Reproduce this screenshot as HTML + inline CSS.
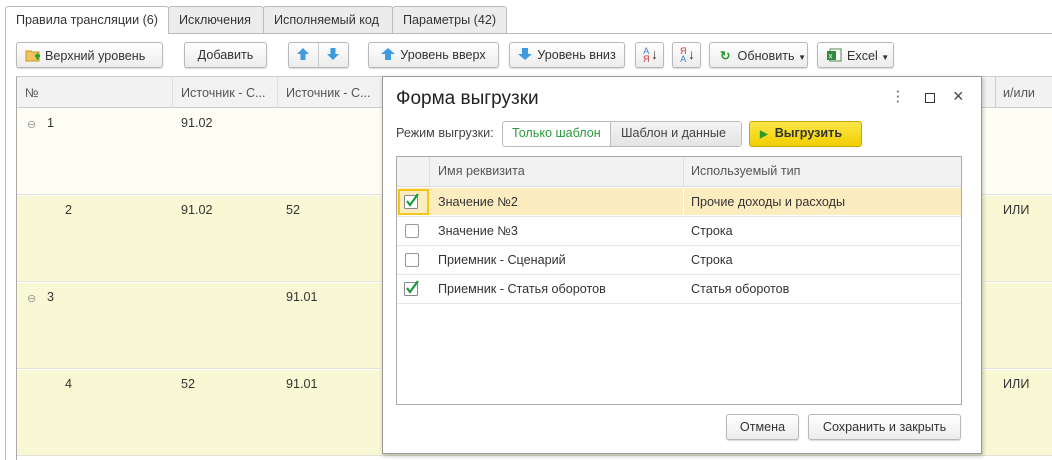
<!DOCTYPE html>
<html><head><meta charset="utf-8"><style>
*{box-sizing:border-box;margin:0;padding:0}
body{width:1052px;height:460px;overflow:hidden;background:#fff;font-family:"Liberation Sans",Arial,sans-serif;font-size:12.6px;color:#333;position:relative}
.a{position:absolute}
.tab{position:absolute;top:6px;height:27px;border:1px solid #bbb;border-bottom:none;background:#ececec;border-radius:3px 3px 0 0;padding:6px 10px 0;color:#333;white-space:nowrap}
.btn{position:absolute;top:42px;height:26px;border:1px solid #b8b8b8;border-radius:3px;background:linear-gradient(#fff,#ececec);box-shadow:0 1px 1px rgba(0,0,0,.15);padding:5px 0 0;text-align:center;color:#333;white-space:nowrap}
.cell{position:absolute;white-space:nowrap}
.hd{background:#f2f2f2;color:#555}
</style></head><body>
<div class="a" style="left:5px;top:33px;width:1047px;height:1px;background:#bbb"></div>
<div class="a" style="left:5px;top:33px;width:1px;height:427px;background:#bbb"></div>
<div class="tab" style="left:5px;width:164px;background:#fff;height:28px;z-index:2">Правила трансляции (6)</div>
<div class="tab" style="left:168px;width:96px">Исключения</div>
<div class="tab" style="left:263px;width:130px">Исполняемый код</div>
<div class="tab" style="left:392px;width:115px">Параметры (42)</div>

<div class="btn" style="left:16px;width:147px;text-align:left;padding-left:8px"><svg width="16" height="14" style="vertical-align:-2px;margin-right:4px"><path d="M1 3h5l1 1h7v9H1z" fill="#f3c35a" stroke="#c8962a"/><path d="M10 8h5M12.5 5.5v6" stroke="#2a2" stroke-width="2.4"/></svg>Верхний уровень</div>
<div class="btn" style="left:184px;width:83px">Добавить</div>
<div class="btn" style="left:288px;width:61px"></div>
<div class="a" style="left:318px;top:43px;width:1px;height:24px;background:#ccc"></div>
<svg class="a" style="left:296px;top:47px" width="14" height="14"><path d="M7 1L13 7H9.5v6h-5V7H1z" fill="#3d9be0"/></svg>
<svg class="a" style="left:326px;top:47px" width="14" height="14"><path d="M7 13L13 7H9.5V1h-5v6H1z" fill="#3d9be0"/></svg>
<div class="btn" style="left:368px;width:131px"><svg width="14" height="12" style="vertical-align:-1px;margin-right:5px"><path d="M7 0L14 6H10v6H4V6H0z" fill="#3d9be0"/></svg>Уровень вверх</div>
<div class="btn" style="left:509px;width:116px"><svg width="14" height="12" style="vertical-align:-1px;margin-right:5px"><path d="M7 12L14 6H10V0H4v6H0z" fill="#3d9be0"/></svg>Уровень вниз</div>
<div class="btn" style="left:635px;width:29px;font-size:9px;line-height:8px;padding-top:5px"><span style="color:#3a7fd0;position:absolute;left:7px;top:4px">А<br><span style="color:#c33">Я</span></span><span style="position:absolute;left:15px;top:3px;font-size:14px;line-height:16px">↓</span></div>
<div class="btn" style="left:672px;width:29px;font-size:9px;line-height:8px;padding-top:5px"><span style="color:#c33;position:absolute;left:7px;top:4px">Я<br><span style="color:#3a7fd0">А</span></span><span style="position:absolute;left:15px;top:3px;font-size:14px;line-height:16px">↓</span></div>
<div class="btn" style="left:709px;width:99px;text-align:left;padding-left:10px"><span style="color:#2a9a2a;font-weight:bold">↻</span>&nbsp; Обновить <span style="font-size:8px">▼</span></div>
<div class="btn" style="left:817px;width:77px;text-align:left;padding-left:8px"><svg width="16" height="14" style="vertical-align:-2px;margin-right:5px"><rect x="4" y="1" width="11" height="12" fill="#fff" stroke="#4a8a4a"/><rect x="1" y="3" width="9" height="9" fill="#2e8b3e"/><text x="2.5" y="10.5" font-size="8" fill="#fff" font-family="Liberation Sans">x</text></svg>Excel <span style="font-size:8px">▼</span></div>

<div class="a" style="left:16px;top:76px;width:1040px;height:384px;border-left:1px solid #aaa;border-top:1px solid #ccc"></div>
<div class="a hd" style="left:17px;top:77px;width:1035px;height:31px;border-bottom:1px solid #ccc"></div>
<div class="a" style="left:172px;top:77px;width:1px;height:118px;background:#e0e0e0"></div>
<div class="a" style="left:277px;top:77px;width:1px;height:118px;background:#e0e0e0"></div>
<div class="a" style="left:995px;top:77px;width:1px;height:31px;background:#ccc"></div>
<div class="cell" style="left:25px;top:86px;color:#555">№</div>
<div class="cell" style="left:181px;top:86px;color:#555">Источник - С...</div>
<div class="cell" style="left:286px;top:86px;color:#555">Источник - С...</div>
<div class="cell" style="left:1003px;top:86px;color:#555">и/или</div>
<div class="a" style="left:17px;top:108px;width:1035px;height:87px;background:#fefef4;border-bottom:1px solid #e2e2d8"></div>
<div class="a" style="left:17px;top:196px;width:1035px;height:86px;background:#f8f8d4;border-bottom:1px solid #e2e2d8"></div>
<div class="a" style="left:17px;top:283px;width:1035px;height:86px;background:#f8f8d4;border-bottom:1px solid #e2e2d8"></div>
<div class="a" style="left:17px;top:370px;width:1035px;height:86px;background:#f8f8d4;border-bottom:1px solid #e2e2d8"></div>
<div class="cell" style="left:27px;top:118px;color:#999;font-size:11px">⊖</div><div class="cell" style="left:47px;top:116px">1</div>
<div class="cell" style="left:181px;top:116px">91.02</div>
<div class="cell" style="left:65px;top:203px">2</div><div class="cell" style="left:181px;top:203px">91.02</div><div class="cell" style="left:286px;top:203px">52</div><div class="cell" style="left:1003px;top:203px">ИЛИ</div>
<div class="cell" style="left:27px;top:292px;color:#999;font-size:11px">⊖</div><div class="cell" style="left:47px;top:290px">3</div><div class="cell" style="left:286px;top:290px">91.01</div>
<div class="cell" style="left:65px;top:377px">4</div><div class="cell" style="left:181px;top:377px">52</div><div class="cell" style="left:286px;top:377px">91.01</div><div class="cell" style="left:1003px;top:377px">ИЛИ</div>

<div class="a" style="left:382px;top:76px;width:600px;height:378px;background:#fff;border:1px solid #999;box-shadow:1px 2px 4px rgba(0,0,0,.25)"></div>
<div class="cell" style="left:396px;top:88px;font-size:19px;color:#222">Форма выгрузки</div>
<div class="cell" style="left:896px;top:89px;color:#777;font-size:13px;line-height:5px;font-weight:bold">·<br>·<br>·</div>
<div class="a" style="left:925px;top:93px;width:10px;height:10px;border:1px solid #333"></div>
<div class="cell" style="left:953px;top:86px;font-size:18px;color:#444">×</div>
<div class="cell" style="left:396px;top:126px;color:#444">Режим выгрузки:</div>
<div class="a" style="left:502px;top:121px;width:240px;height:26px;border:1px solid #bbb;border-radius:3px;background:#fff"></div>
<div class="a" style="left:610px;top:122px;width:131px;height:24px;background:linear-gradient(#f4f4f4,#e4e4e4);border-left:1px solid #bbb"></div>
<div class="cell" style="left:512px;top:126px;color:#2a9a3a">Только шаблон</div>
<div class="cell" style="left:621px;top:126px;color:#444">Шаблон и данные</div>
<div class="a" style="left:749px;top:121px;width:113px;height:26px;border:1px solid #c9a800;border-radius:3px;background:linear-gradient(#fbe64a,#f2cf00)"></div>
<div class="cell" style="left:760px;top:126px;font-weight:bold;color:#333"><span style="color:#2a9a2a;font-size:10px">▶</span>&nbsp; Выгрузить</div>

<div class="a" style="left:396px;top:156px;width:566px;height:249px;border:1px solid #aaa"></div>
<div class="a hd" style="left:397px;top:157px;width:564px;height:30px;border-bottom:1px solid #ddd"></div>
<div class="a" style="left:429px;top:157px;width:1px;height:30px;background:#ddd"></div>
<div class="a" style="left:683px;top:157px;width:1px;height:30px;background:#ddd"></div>
<div class="cell" style="left:438px;top:164px;color:#555">Имя реквизита</div>
<div class="cell" style="left:691px;top:164px;color:#555">Используемый тип</div>
<div class="a" style="left:397px;top:188px;width:564px;height:27px;background:#fcedc0"></div>
<div class="a" style="left:683px;top:188px;width:1px;height:27px;background:#fff"></div>
<div class="a" style="left:397px;top:216px;width:564px;height:1px;background:#e6e6e6"></div>
<div class="a" style="left:397px;top:245px;width:564px;height:1px;background:#e6e6e6"></div>
<div class="a" style="left:397px;top:274px;width:564px;height:1px;background:#e6e6e6"></div>
<div class="a" style="left:397px;top:303px;width:564px;height:1px;background:#e6e6e6"></div>
<div class="a" style="left:398px;top:189px;width:31px;height:26px;border:2px solid #f5c518"></div>
<svg class="a" style="left:404px;top:193px" width="16" height="16"><rect x="0.5" y="2.5" width="13" height="13" fill="#fff" stroke="#888" rx="1"/><path d="M3 8l3 4 8-11" stroke="#1a9a3a" stroke-width="2.2" fill="none"/></svg>
<div class="a" style="left:405px;top:224px;width:14px;height:14px;border:1px solid #999;border-radius:2px"></div>
<div class="a" style="left:405px;top:253px;width:14px;height:14px;border:1px solid #999;border-radius:2px"></div>
<svg class="a" style="left:404px;top:280px" width="16" height="16"><rect x="0.5" y="2.5" width="13" height="13" fill="#fff" stroke="#888" rx="1"/><path d="M3 8l3 4 8-11" stroke="#1a9a3a" stroke-width="2.2" fill="none"/></svg>
<div class="cell" style="left:438px;top:195px">Значение №2</div><div class="cell" style="left:691px;top:195px">Прочие доходы и расходы</div>
<div class="cell" style="left:438px;top:224px">Значение №3</div><div class="cell" style="left:691px;top:224px">Строка</div>
<div class="cell" style="left:438px;top:253px">Приемник - Сценарий</div><div class="cell" style="left:691px;top:253px">Строка</div>
<div class="cell" style="left:438px;top:282px">Приемник - Статья оборотов</div><div class="cell" style="left:691px;top:282px">Статья оборотов</div>

<div class="btn" style="left:726px;top:414px;width:73px">Отмена</div>
<div class="btn" style="left:808px;top:414px;width:153px">Сохранить и закрыть</div>
</body></html>
